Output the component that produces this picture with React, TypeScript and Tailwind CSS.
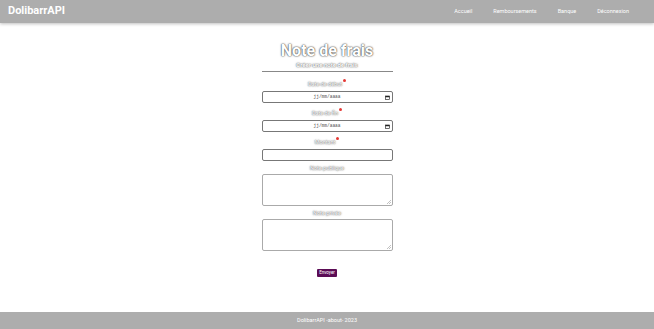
const shadow = "[text-shadow:0_0_2px_#666,0_0_1px_#666]";

function Label({ text, required }: { text: string; required?: boolean }) {
  return (
    <div className="flex h-[8px] items-start justify-center">
      <span className={`text-[5.5px] leading-[8px] text-white ${shadow}`}>{text}</span>
      {required && <span className="ml-[1px] mt-[-1px] h-[3px] w-[3px] rounded-full bg-[#e53935]" />}
    </div>
  );
}

function DateBox() {
  return (
    <div className="relative flex h-[12px] w-[131px] items-center justify-center rounded-[2px] border border-[#777] bg-white">
      <span className="font-['Liberation_Mono',monospace] text-[4.5px] text-[#555]">jj/mm/aaaa</span>
      <svg className="absolute right-[2px] top-[2.5px]" width="5" height="5" viewBox="0 0 10 10">
        <rect x="1" y="2" width="8" height="7" fill="none" stroke="#222" strokeWidth="1.3" />
        <rect x="1" y="2" width="8" height="2.5" fill="#222" />
      </svg>
    </div>
  );
}

function Area() {
  return (
    <div className="relative h-[32px] w-[131px] rounded-[2px] border border-[#aaa] bg-white">
      <svg className="absolute bottom-[1px] right-[1px]" width="4" height="4" viewBox="0 0 4 4">
        <path d="M0 4 L4 0 M2 4 L4 2" stroke="#999" strokeWidth="0.6" />
      </svg>
    </div>
  );
}

export default function App() {
  return (
    <div className="flex h-[329px] w-full flex-col bg-white font-['Roboto',sans-serif]">
      <header className="flex h-[23px] items-center justify-between bg-[#adadad] pl-[8px] pr-[25px] shadow-[0_1px_3px_rgba(0,0,0,0.25)]">
        <div className="text-[11px] font-bold text-white">DolibarrAPI</div>
        <nav className="flex gap-[21px] text-[5.5px] text-white">
          <span>Accueil</span>
          <span>Remboursements</span>
          <span>Banque</span>
          <span>Déconnexion</span>
        </nav>
      </header>

      <main className="flex flex-1 flex-col items-center pt-[18px]">
        <h1 className="text-[16px] font-bold leading-[20px] text-white [text-shadow:0_0_2px_#444,0_0_1px_#444]">Note de frais</h1>
        <div className={`text-[6px] font-bold leading-[7px] text-white ${shadow}`}>Créer une note de frais</div>
        <div className="mt-[3px] h-px w-[131px] bg-[#888]" />

        <div className="mt-[8px] flex flex-col items-center">
          <Label text="Date de début" required />
          <div className="mt-[3px]"><DateBox /></div>
          <div className="mt-[6px]"><Label text="Date de fin" required /></div>
          <div className="mt-[3px]"><DateBox /></div>
          <div className="mt-[6px]"><Label text="Montant" required /></div>
          <div className="mt-[3px] h-[12px] w-[131px] rounded-[2px] border border-[#777] bg-white" />
          <div className="mt-[3px]"><Label text="Note publique" /></div>
          <div className="mt-[2px]"><Area /></div>
          <div className="mt-[3px]"><Label text="Note privée" /></div>
          <div className="mt-[2px]"><Area /></div>
          <button className="mt-[18px] h-[8px] rounded-[1px] bg-[#5b0c55] px-[2px] text-[4.5px] leading-[8px] text-white">Envoyer</button>
        </div>
      </main>

      <footer className="flex h-[17px] items-center justify-center bg-[#adadad] text-[5.5px] text-white">
        DolibarrAPI -about- 2023
      </footer>
    </div>
  );
}
